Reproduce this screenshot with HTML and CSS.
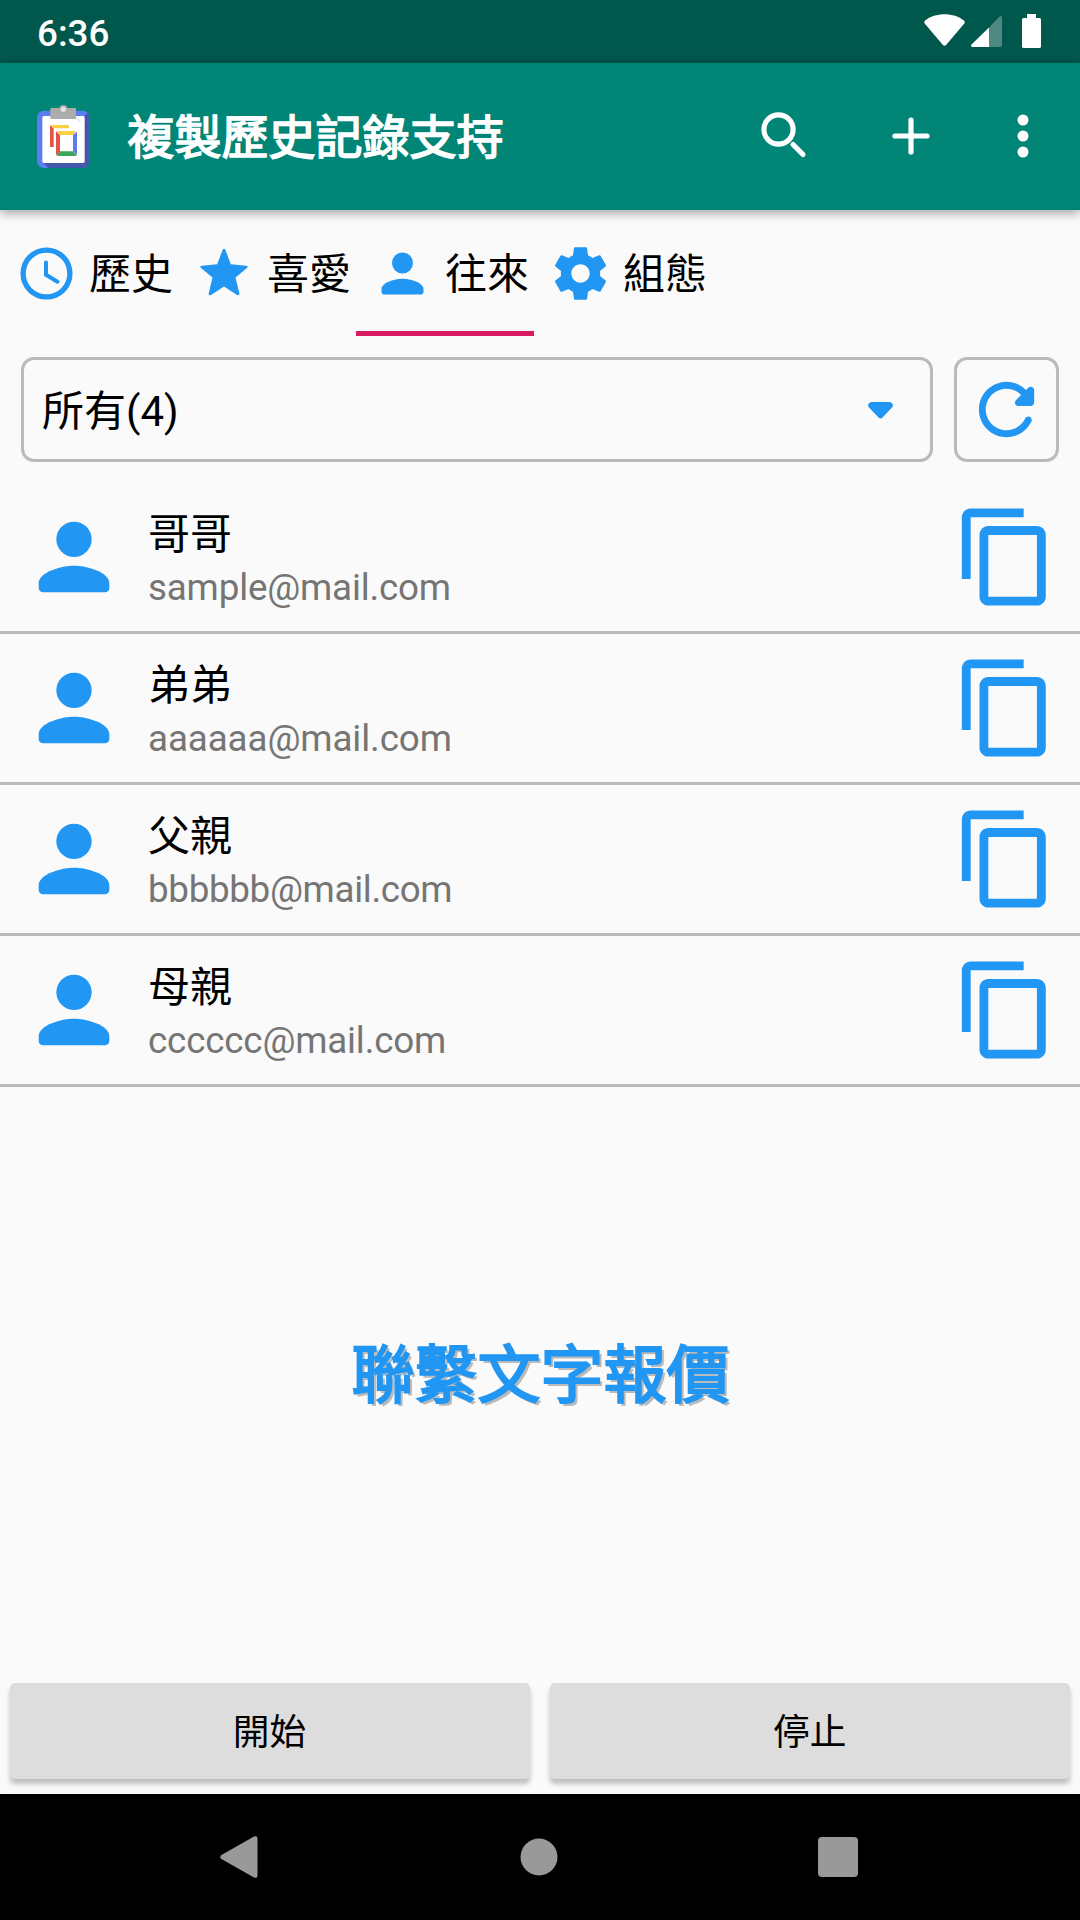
FILE: index.html
```html
<!DOCTYPE html>
<html lang="zh-Hant">
<head>
<meta charset="utf-8">
<title>複製歷史記錄支持</title>
<link rel="stylesheet" href="styles.css">
</head>
<body>
<svg class="defs" width="0" height="0">
  <symbol id="person" viewBox="0 0 24 24"><circle cx="12" cy="8" r="4"/><path d="M12 14c-2.67 0-8 1.34-8 4v1c0 .55.45 1 1 1h14c.55 0 1-.45 1-1v-1c0-2.66-5.33-4-8-4z"/></symbol>
  <symbol id="copy" viewBox="0 0 24 24"><path d="M16 1H4c-1.1 0-2 .9-2 2v14h2V3h12V1zM19 5H8c-1.1 0-2 .9-2 2v14c0 1.1.9 2 2 2h11c1.1 0 2-.9 2-2V7c0-1.1-.9-2-2-2zm0 16H8V7h11v14z"/></symbol>
</svg>
<div class="screen">
  <header class="status">
    <span class="clock">6:36</span>
    <svg class="status-icons" width="120" height="63" viewBox="0 0 120 63">
      <path d="M5 20.500C15 12 34 12 44 20.500Q45.500 22 44.300 23.600L26.300 44.800Q24.500 46.600 22.700 44.800L4.700 23.600Q3.500 22 5 20.500z"/>
      <path class="dim" d="M69 27.500L79 17Q82 14.800 82 18V45Q82 47 80 47H69z"/>
      <path d="M69 27.500V47H53Q50 46.600 51.500 44.500z"/>
      <path d="M107 14h9v4h3.500q1.500 0 1.500 1.500v27q0 1.500-1.500 1.500h-16q-1.500 0-1.500-1.500v-27q0-1.500 1.500-1.500h3.500z"/>
    </svg>
  </header>
  <div class="appbar">
    <svg class="logo" width="90" height="90" viewBox="0 0 270 270">
      <rect x="51" y="62" width="158" height="172" rx="21" fill="#5c7cf0"/>
      <path d="M194 78L203 68Q209 75 209 84V213Q209 234 188 234H86L67 215z" fill="#4259a9"/>
      <rect x="67" y="78" width="127" height="141" rx="5" fill="#fff"/>
      <path d="M91 87H168L182 100V92L168 78z" fill="#e9e9e9"/>
      <rect x="91" y="54" width="77" height="33" rx="3" fill="#acacac"/>
      <circle cx="130" cy="58" r="13" fill="#acacac"/><circle cx="130" cy="58" r="8" fill="#e4e4e4"/>
      <path d="M90 106L101 115V171H90z" fill="#e65245"/><path d="M90 105H147V115H101z" fill="#fbd043"/>
      <path d="M108 124L120 135V184L110 196Q108 195 108 191z" fill="#e65245"/><path d="M111 123H169L159 135H120z" fill="#fbd043"/><path d="M171 125V195L159 184V135z" fill="#5c7cf0"/><path d="M120 184H159L170 196Q169 198 166 198H113L110 196z" fill="#3fa45b"/>
    </svg>
    <h1>複製歷史記錄支持</h1>
    <svg class="search" width="48" height="48" viewBox="0 0 48 48"><circle cx="18.500" cy="18.500" r="14.600"/><path d="M33 33.500L43 43.500"/></svg>
    <svg class="plus" width="38" height="38" viewBox="0 0 38 38"><path d="M19 3V35M3 19H35"/></svg>
    <svg class="more" width="12" height="44" viewBox="0 0 12 44"><circle cx="6" cy="6" r="5.500"/><circle cx="6" cy="22" r="5.500"/><circle cx="6" cy="38" r="5.500"/></svg>
  </div>
  <nav class="tabs">
    <div class="tab"><svg class="line" width="63" height="63" viewBox="0 0 63 63"><circle cx="31.500" cy="31.500" r="23.400"/><path class="hands" d="M31 20.500V32.800L42.500 39.700"/></svg><span>歷史</span></div>
    <div class="tab"><svg width="63" height="63" viewBox="0.5 0.5 63 63"><path d="M30 8.500Q31.500 6.200 33 8.500L38.300 22.800L53.800 24.200Q56.500 24.700 54.500 26.500L43 35.900L46.900 52Q47 54.700 44.500 53.400L31.500 45.100L18.500 53.400Q15.800 54.600 16.200 52L20 35.900L8.500 26.500Q6.500 24.700 9.200 24.200L24.700 22.800z"/></svg><span>喜愛</span></div>
    <div class="tab active"><svg width="63" height="63"><use href="#person"/></svg><span>往來</span></div>
    <div class="tab"><svg width="63" height="63" viewBox="0 0 24 24"><path d="M19.430 12.980c.04-.32.07-.64.07-.98s-.03-.66-.07-.98l2.110-1.650c.19-.15.24-.42.12-.64l-2-3.460c-.12-.22-.39-.3-.61-.22l-2.490 1c-.52-.4-1.080-.73-1.690-.98l-.38-2.650C14.460 2.180 14.250 2 14 2h-4c-.25 0-.46.18-.49.42l-.38 2.650c-.61.25-1.170.59-1.690.98l-2.490-1c-.23-.09-.49 0-.61.22l-2 3.460c-.13.22-.07.49.12.64l2.110 1.650c-.04.32-.07.65-.07.98s.03.66.07.98l-2.110 1.650c-.19.15-.24.42-.12.64l2 3.460c.12.22.39.3.61.22l2.490-1c.52.4 1.080.73 1.690.98l.38 2.650c.03.24.24.42.49.42h4c.25 0 .46-.18.49-.42l.38-2.650c.61-.25 1.170-.59 1.690-.98l2.490 1c.23.09.49 0 .61-.22l2-3.460c.12-.22.07-.49-.12-.64l-2.110-1.650zM12 15.500c-1.930 0-3.500-1.570-3.500-3.500s1.570-3.500 3.500-3.500 3.500 1.570 3.500 3.500-1.570 3.500-3.500 3.500z"/></svg><span>組態</span></div>
  </nav>
  <div class="filter">
    <div class="select"><span>所有(4)</span><svg width="25" height="17" viewBox="0 0 25 17"><path d="M3 0H22Q26 1.500 24.500 5L14.500 15.500Q12.500 17.500 10.500 15.500L.5 5Q-1 1.500 3 0z"/></svg></div>
    <div class="refresh"><svg width="83" height="83" viewBox="0 0 24 24"><path d="M17.650 6.350c-1.630-1.630-3.940-2.570-6.480-2.310-3.670.37-6.690 3.350-7.100 7.020C3.520 15.910 7.270 20 12 20c3.190 0 5.930-1.870 7.210-4.560.32-.67-.16-1.440-.9-1.440-.37 0-.72.2-.88.53-1.130 2.430-3.840 3.970-6.800 3.310-2.220-.49-4.010-2.300-4.480-4.520C5.310 9.440 8.260 6 12 6c1.660 0 3.140.69 4.220 1.780l-1.510 1.510c-.63.63-.19 1.710.7 1.710H19c.55 0 1-.45 1-1V6.410c0-.89-1.080-1.340-1.710-.71l-.64.65z"/></svg></div>
  </div>
  <ul class="list">
    <li><svg width="106" height="106"><use href="#person"/></svg><div class="info"><b>哥哥</b><span>sample@mail.com</span></div><svg width="106" height="106"><use href="#copy"/></svg></li>
    <li><svg width="106" height="106"><use href="#person"/></svg><div class="info"><b>弟弟</b><span class="loose">aaaaaa@mail.com</span></div><svg width="106" height="106"><use href="#copy"/></svg></li>
    <li><svg width="106" height="106"><use href="#person"/></svg><div class="info"><b>父親</b><span class="tight">bbbbbb@mail.com</span></div><svg width="106" height="106"><use href="#copy"/></svg></li>
    <li><svg width="106" height="106"><use href="#person"/></svg><div class="info"><b>母親</b><span>cccccc@mail.com</span></div><svg width="106" height="106"><use href="#copy"/></svg></li>
  </ul>
  <div class="banner"><strong>聯繫文字報價</strong></div>
  <div class="actions"><button>開始</button><button>停止</button></div>
  <footer class="navbar">
    <svg width="38" height="42" viewBox="0 0 38 42"><path d="M34 .5Q37.500-.8 37.500 3V39Q37.500 42.800 34 41.500L1 22.800Q-.5 21 1 19.200z"/></svg>
    <svg width="38" height="38" viewBox="0 0 38 38"><circle cx="20" cy="19" r="18.500"/></svg>
    <svg width="40" height="40" viewBox="0 0 40 40"><rect width="40" height="40" rx="4"/></svg>
  </footer>
</div>
</body>
</html>
```
FILE: styles.css
```css
* { box-sizing: border-box; }
body { margin: 0; font-family: Roboto, "Noto Sans CJK TC", sans-serif; color: #000; background: #fafafa; }
svg { display: block; flex: none; fill: #2196f3; overflow: visible; }
.defs { position: absolute; }
.screen { width: 1080px; height: 1920px; display: flex; flex-direction: column; overflow: hidden; }

.status { height: 63px; flex: none; background: #00574b; display: flex; align-items: center; justify-content: space-between; padding: 0 40px 0 37px; }
.clock { color: #fff; font-size: 36.75px; font-weight: 500; line-height: 43px; padding-top: 4px; }
.status-icons { fill: #fff; }
.dim { opacity: .3; }

.appbar { height: 147px; flex: none; background: #008577; display: flex; align-items: center; padding: 0 51.5px 0 20px; box-shadow: 0 3px 10px rgba(0, 0, 0, .36); z-index: 1; }
.logo { margin-right: 17.5px; margin-bottom: 3px; }
.appbar h1 { margin: 0; padding-top: 3px; flex: 1; color: #fff; font-size: 47px; line-height: 60px; font-weight: 400; -webkit-text-stroke: 1.6px #fff; white-space: nowrap; }
.appbar .more { fill: #fff; margin-bottom: 1px; }
.appbar .search, .appbar .plus { fill: none; stroke: #fff; stroke-width: 5.2; stroke-linecap: round; }
.appbar .search { margin-right: 84px; margin-bottom: 4px; }
.appbar .plus { margin-right: 86.5px; margin-bottom: 2px; }

.tabs { height: 126px; flex: none; display: flex; }
.tab { width: 178px; display: flex; align-items: center; gap: 11px; padding-left: 15px; border-bottom: 5px solid transparent; padding-top: 5px; font-size: 42px; line-height: 60px; white-space: nowrap; }
.tab span { padding-top: 3px; }
.tab.active { border-color: #d81b60; }
.tab svg.line { fill: none; stroke: #2196f3; stroke-width: 5.3; }
.tab .hands { stroke-width: 4; stroke-linecap: round; }

.filter { display: flex; gap: 21px; padding: 21px 21px 0; height: 126px; flex: none; }
.select, .refresh { height: 105px; border: 3px solid #bababa; border-radius: 13px; display: flex; align-items: center; }
.select { flex: 1; justify-content: space-between; padding: 2px 37px 0 18px; font-size: 42px; line-height: 60px; }
.select span { padding-top: 2px; }
.refresh { width: 105px; justify-content: center; }

.list { list-style: none; margin: 21px 0 0; padding: 0; flex: none; }
.list li { height: 151px; border-bottom: 3px solid #bababa; display: flex; align-items: center; gap: 21px; padding: 0 21px; }
.info { flex: 1; display: flex; flex-direction: column; padding-top: 2px; }
.info b { font-weight: 400; font-size: 42px; line-height: 60px; }
.info span { font-size: 36.75px; line-height: 46px; letter-spacing: -.17px; color: #757575; }
.info .loose { letter-spacing: -.09px; }
.info .tight { letter-spacing: -.32px; }

.banner { flex: 1; display: flex; align-items: center; justify-content: center; padding: 0 0 18px 1px; }
.banner strong { width: 378px; overflow: hidden; font-size: 63px; line-height: 90px; font-weight: 400; -webkit-text-stroke: 2.1px #2196f3; color: #2196f3; text-shadow: 3px 3px 0 #bababa; white-space: nowrap; }

.actions { height: 111px; flex: none; display: flex; gap: 20px; padding: 0 10px 15px 9.5px; }
.actions button { flex: 1; border: 0; border-radius: 5px; background: #dddddd; font: 400 36.75px/52px Roboto, "Noto Sans CJK TC", sans-serif; color: #000; box-shadow: 0 5px 5px rgba(0, 0, 0, .24); padding: 4px 0 0; }

.navbar { height: 126px; flex: none; background: #000; display: flex; align-items: center; justify-content: space-between; padding: 0 222px 0 220px; }
.navbar svg { fill: #999; }
```
